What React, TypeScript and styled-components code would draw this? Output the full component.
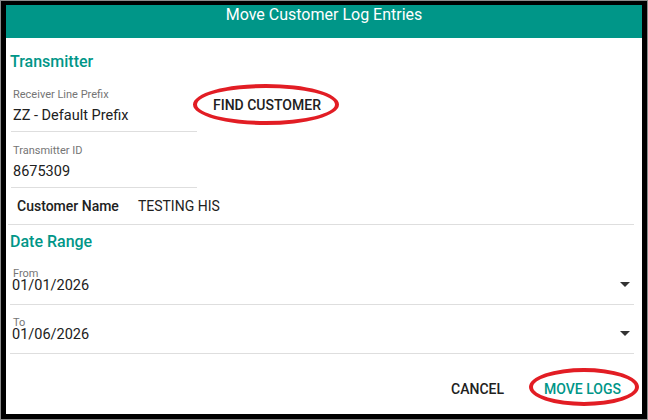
import styled, { createGlobalStyle } from "styled-components";

const GlobalStyle = createGlobalStyle`
  html, body {
    margin: 0;
    padding: 0;
    background: #ffffff;
  }
  body {
    font-family: Roboto, "Liberation Sans", sans-serif;
  }
  * {
    box-sizing: border-box;
  }
`;

const TEAL = "#009688";
const RED = "#e21d24";

const Frame = styled.div`
  width: 648px;
  height: 420px;
  border: 1px solid #8c8c8c;
`;

const Dialog = styled.div`
  height: 100%;
  border-style: solid;
  border-color: #000;
  border-width: 4px 5px 5px 5px;
  display: flex;
  flex-direction: column;
  background: #fff;
`;

const Header = styled.div`
  height: 33px;
  flex: none;
  background: ${TEAL};
  color: #fff;
  font-size: 16px;
  line-height: 20px;
  text-align: center;
`;

const Body = styled.div`
  flex: 1;
  padding: 14px 8px 0 4px;
  display: flex;
  flex-direction: column;
`;

const SectionTitle = styled.h2<{ $top?: number }>`
  margin: ${(p) => p.$top ?? 0}px 0 4px 0;
  font-size: 16px;
  line-height: 20px;
  font-weight: 500;
  color: ${TEAL};
`;

const TransmitterRow = styled.div`
  display: flex;
  align-items: flex-start;
`;

const FieldColumn = styled.div`
  width: 186px;
  margin-left: 1px;
  display: flex;
  flex-direction: column;
`;

const TextField = styled.div`
  padding: 13px 0 5px 2px;
  border-bottom: 1px solid #dedede;
`;

const Label = styled.div`
  font-size: 11px;
  line-height: 12px;
  color: #757575;
`;

const Value = styled.div`
  margin-top: 5px;
  font-size: 14.5px;
  line-height: 20px;
  color: #212121;
`;

const Button = styled.button<{ $primary?: boolean }>`
  position: relative;
  border: 0;
  background: transparent;
  padding: 6px 16px;
  font-family: Roboto, "Liberation Sans", sans-serif;
  font-size: 14px;
  line-height: 20px;
  font-weight: 500;
  letter-spacing: 0;
  text-transform: uppercase;
  color: ${(p) => (p.$primary ? TEAL : "#212121")};
  cursor: pointer;
`;

const FindButton = styled(Button)`
  margin-top: 13px;
`;

/* red hand-drawn annotation around a button */
const Circled = styled.span<{ $inset: string }>`
  position: absolute;
  inset: ${(p) => p.$inset};
  border: 4px solid ${RED};
  border-radius: 50%;
  pointer-events: none;
`;

const CustomerRow = styled.div`
  display: flex;
  align-items: center;
  height: 37px;
  margin-left: -2px;
  padding: 0 0 1px 9px;
  border-bottom: 1px solid #dedede;
  font-size: 14px;
  line-height: 20px;
  color: #212121;
`;

const CustomerLabel = styled.span`
  font-weight: 500;
  margin-right: 19px;
`;

const DateField = styled.div`
  display: grid;
  grid-template-columns: 1fr auto;
  padding: 13px 4px 11px 3px;
  border-bottom: 1px solid #dedede;
`;

const DateLabel = styled.div`
  grid-column: 1;
  font-size: 11px;
  line-height: 10px;
  color: #757575;
`;

const DateValue = styled.div`
  grid-column: 1;
  margin-left: -1px;
  font-size: 14.5px;
  line-height: 14px;
  color: #212121;
`;

const Caret = styled.span`
  grid-column: 2;
  grid-row: 2;
  align-self: center;
  margin-top: -3px;
  width: 0;
  height: 0;
  border-left: 5px solid transparent;
  border-right: 5px solid transparent;
  border-top: 5px solid #333;
`;

const Footer = styled.div`
  display: flex;
  justify-content: flex-end;
  gap: 8px;
  padding: 0 5px 9px 0;
`;

function DatePicker({ label, value }: { label: string; value: string }) {
  return (
    <DateField>
      <DateLabel>{label}</DateLabel>
      <DateValue>{value}</DateValue>
      <Caret />
    </DateField>
  );
}

export default function App() {
  return (
    <>
      <GlobalStyle />
      <Frame>
        <Dialog>
          <Header>Move Customer Log Entries</Header>
          <Body>
            <SectionTitle>Transmitter</SectionTitle>
            <TransmitterRow>
              <FieldColumn>
                <TextField>
                  <Label>Receiver Line Prefix</Label>
                  <Value>ZZ - Default Prefix</Value>
                </TextField>
                <TextField>
                  <Label>Transmitter ID</Label>
                  <Value>8675309</Value>
                </TextField>
              </FieldColumn>
              <FindButton>
                Find Customer
                <Circled $inset="-5px -2px -4px -4px" />
              </FindButton>
            </TransmitterRow>
            <CustomerRow>
              <CustomerLabel>Customer Name</CustomerLabel>
              TESTING HIS
            </CustomerRow>
            <SectionTitle $top={7}>Date Range</SectionTitle>
            <DatePicker label="From" value="01/01/2026" />
            <DatePicker label="To" value="01/06/2026" />
          </Body>
          <Footer>
            <Button>Cancel</Button>
            <Button $primary>
              Move Logs
              <Circled $inset="-5px -2px -1px 1px" />
            </Button>
          </Footer>
        </Dialog>
      </Frame>
    </>
  );
}
